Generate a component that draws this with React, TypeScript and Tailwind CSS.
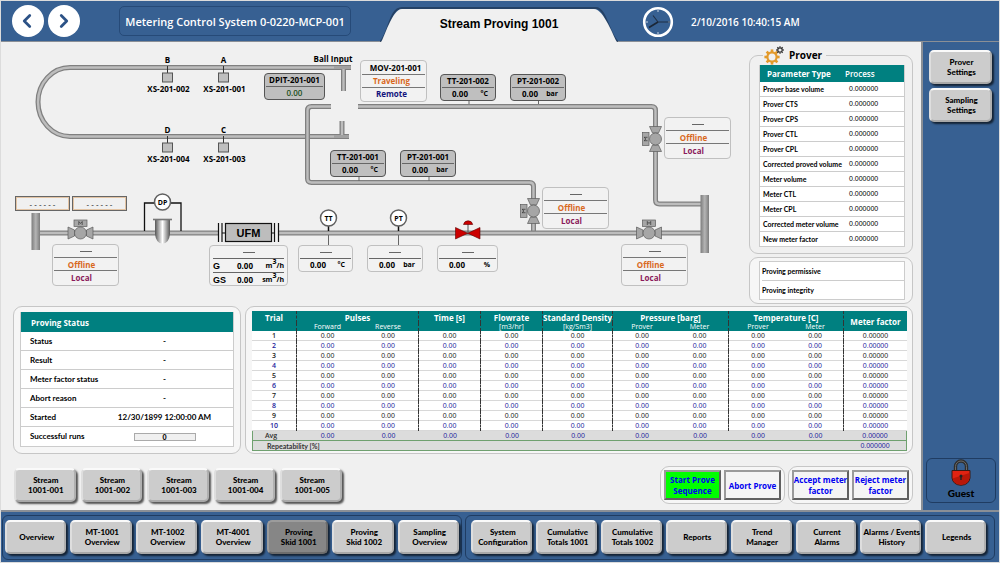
import type { ReactNode } from 'react';
import { ChevronLeft, ChevronRight } from 'lucide-react';

const proverRows = [
  'Prover base volume',
  'Prover CTS',
  'Prover CPS',
  'Prover CTL',
  'Prover CPL',
  'Corrected proved volume',
  'Meter volume',
  'Meter CTL',
  'Meter CPL',
  'Corrected meter volume',
  'New meter factor',
];

const statusRows = [
  { label: 'Status', value: '-' },
  { label: 'Result', value: '-' },
  { label: 'Meter factor status', value: '-' },
  { label: 'Abort reason', value: '-' },
  { label: 'Started', value: '12/30/1899 12:00:00 AM' },
];

const streams = ['001', '002', '003', '004', '005'];

const leftNav = [
  ['Overview'],
  ['MT-1001', 'Overview'],
  ['MT-1002', 'Overview'],
  ['MT-4001', 'Overview'],
  ['Proving', 'Skid 1001'],
  ['Proving', 'Skid 1002'],
  ['Sampling', 'Overview'],
];

const rightNav = [
  ['System', 'Configuration'],
  ['Cumulative', 'Totals 1001'],
  ['Cumulative', 'Totals 1002'],
  ['Reports'],
  ['Trend', 'Manager'],
  ['Current', 'Alarms'],
  ['Alarms / Events', 'History'],
  ['Legends'],
];

const trials = [1, 2, 3, 4, 5, 6, 7, 8, 9, 10];

// last column index of every column group, a dashed rule follows it
const groupEnds = [1, 2, 3, 4, 6, 8];

function BevelButton({ lines, active = false }: { lines: string[]; active?: boolean }) {
  return (
    <button
      type="button"
      className={`flex h-[34px] w-full items-center justify-center rounded-[5px] border-2 font-['Lato',sans-serif] text-[8px] leading-[10px] font-black text-black shadow-[2px_2px_2px_rgba(0,0,0,0.65)] ${
        active
          ? 'border-[#9c9c9c] border-r-[#6c6c6c] border-b-[#6c6c6c] bg-[#868686]'
          : 'border-[#dedede] border-t-[#fafafa] border-r-[#b0b0b0] border-b-[#a8a8a8] bg-[#cccccc]'
      }`}
    >
      <span className="pl-0.5 whitespace-nowrap">
        {lines.map((line) => (
          <span key={line} className="block">
            {line}
          </span>
        ))}
      </span>
    </button>
  );
}

function ActionButton({ lines, green = false }: { lines: string[]; green?: boolean }) {
  return (
    <button
      type="button"
      className={`h-[30px] w-[57px] border-2 border-[#9a9a9a] border-r-[#606060] border-b-[#606060] text-[8px] leading-[11px] font-bold whitespace-nowrap text-[#0000f0] ${
        green ? 'bg-[#00ff00]' : 'bg-[#f4f4f4]'
      }`}
    >
      <span className="-mx-2 block">
        {lines.map((line) => (
          <span key={line} className="block">
            {line}
          </span>
        ))}
      </span>
    </button>
  );
}

function Panel({ className = '', children }: { className?: string; children: ReactNode }) {
  return <section className={`rounded-[9px] border border-[#c6c6c6] bg-[#f6f6f6] ${className}`}>{children}</section>;
}

function Gears() {
  return (
    <svg width="22" height="20" viewBox="0 0 22 20" aria-hidden="true">
      <g stroke="#e39a2b" fill="none">
        <circle cx="9" cy="12" r="4.6" strokeWidth="2.2" />
        {[0, 45, 90, 135, 180, 225, 270, 315].map((a) => (
          <path key={a} d="M9 7V4.4" strokeWidth="2.6" transform={`rotate(${a} 9 12)`} />
        ))}
      </g>
      <g stroke="#333" fill="none">
        <circle cx="17" cy="5" r="2.2" strokeWidth="1.2" />
        {[0, 45, 90, 135, 180, 225, 270, 315].map((a) => (
          <path key={a} d="M17 2.6V1.2" strokeWidth="1.3" transform={`rotate(${a} 17 5)`} />
        ))}
      </g>
    </svg>
  );
}

function Clock() {
  return (
    <svg width="32" height="32" viewBox="0 0 32 32" aria-hidden="true">
      <circle cx="16" cy="16" r="13.8" fill="none" stroke="#fff" strokeWidth="2.6" />
      <path d="M16 4v2M16 26v2M4 16h2M26 16h2" stroke="#c8d4e4" />
      <path d="M16 16H28M16 16L11 9.5" stroke="#1f2f45" strokeWidth="1.1" />
      <path d="M16 16L7 21.5" stroke="#1b2636" strokeWidth="1.6" />
    </svg>
  );
}

function Lock() {
  return (
    <svg width="20" height="27" viewBox="0 0 20 27" aria-hidden="true">
      <path d="M4.5 13V7.5a5.5 5.5 0 0 1 11 0V13" fill="none" stroke="#2e2e2e" strokeWidth="3.4" />
      <path d="M4.5 12V7.5a5.5 5.5 0 0 1 11 0V12" fill="none" stroke="#6a6a6a" strokeWidth="1" />
      <path d="M1 11.5H19V19Q18 25.800 10 26.300Q2 25.800 1 19z" fill="#e02312" stroke="#3a1a14" strokeWidth="1" />
      <path d="M1.500 19.500L18.500 14V19Q17.300 25.200 10 25.700Q2.700 25.200 1.500 19.500z" fill="#b81708" />
      <circle cx="10" cy="17" r="1.5" fill="#222" />
      <path d="M10 17v4" stroke="#222" strokeWidth="1.4" />
    </svg>
  );
}

function Pipe({ d }: { d: string }) {
  return (
    <g fill="none">
      <path d={d} stroke="#808080" strokeWidth="5" />
      <path d={d} stroke="#bdbdbd" strokeWidth="2.4" />
    </g>
  );
}

function Valve({ x, y, turned = false }: { x: number; y: number; turned?: boolean }) {
  return (
    <g transform={`translate(${x} ${y})${turned ? ' rotate(-90)' : ''}`} stroke="#5c5c5c" strokeWidth=".7" fill="#a6a6a6">
      <rect x="-6.5" y="-13" width="13" height="6.5" />
      <path d="M-1.700-8V-11.500L0-9.500L1.700-11.500V-8" fill="none" stroke="#333" />
      <path d="M-12.500-6L-6-3V3L-12.500 6zM12.500-6L6-3V3L12.500 6z" />
      <circle r="6" />
    </g>
  );
}

function Sensor({ x, y, name, tag }: { x: number; y: number; name: string; tag: string }) {
  return (
    <g>
      <path d={`M${x} ${y}v7`} stroke="#333" />
      <rect x={x - 5} y={y + 7} width="10" height="9" fill="#bfbfbf" stroke="#555" />
      <text x={x} y={y - 3} textAnchor="middle">
        {name}
      </text>
      <text x={x + 1} y={y + 26} textAnchor="middle">
        {tag}
      </text>
    </g>
  );
}

function Gauge({ x, y, name }: { x: number; y: number; name: string }) {
  return (
    <g>
      <circle cx={x} cy={y} r="8" fill="#fff" stroke="#606060" strokeWidth="1.5" />
      <text x={x} y={y + 3} textAnchor="middle" fontSize="7">
        {name}
      </text>
    </g>
  );
}

function Piping() {
  return (
    <svg
      width="745"
      height="264"
      viewBox="0 42 745 264"
      className="font-['Open_Sans',sans-serif] text-[8px] font-bold"
      aria-label="Prover piping"
    >
      <defs>
        <linearGradient id="header-pipe">
          <stop offset="0" stopColor="#7c7c7c" />
          <stop offset=".5" stopColor="#b4b4b4" />
          <stop offset="1" stopColor="#7c7c7c" />
        </linearGradient>
        <linearGradient id="strainer">
          <stop offset="0" stopColor="#555" />
          <stop offset=".5" stopColor="#fff" />
          <stop offset="1" stopColor="#555" />
        </linearGradient>
      </defs>

      {/* prover loop and the launch / receive tees */}
      <Pipe d="M351 67.5H70A32 34.5 0 0 0 70 136.5H349" />
      <Pipe d="M343.5 67V91" />
      <Pipe d="M342 121V136" />
      <path d="M334 67.5H351M334 136.5H349" stroke="#a2a2a2" strokeWidth="3" />

      {/* prover inlet and outlet lines */}
      <Pipe d="M331 106.5H311.5Q307.5 106.5 307.5 110.5V178.5Q307.5 182.5 311.5 182.5H529.5Q533.5 182.5 533.5 186.5V233" />
      <Pipe d="M358 106.5H651.5Q655.5 106.5 655.5 110.5V200Q655.5 204 659.5 204H703" />
      <Pipe d="M40 233H703" />

      <rect x="31.5" y="213" width="8.5" height="37" fill="url(#header-pipe)" />
      <rect x="700.5" y="195" width="8.5" height="58" fill="url(#header-pipe)" />

      <Sensor x={167.5} y={66} name="B" tag="XS-201-002" />
      <Sensor x={223.5} y={66} name="A" tag="XS-201-001" />
      <Sensor x={167.5} y={136} name="D" tag="XS-201-004" />
      <Sensor x={223.5} y={136} name="C" tag="XS-201-003" />
      <text x="333" y="62" textAnchor="middle">
        Ball Input
      </text>

      <path d="M469 100v4M538.5 100v4M359 177v4M429 177v4" stroke="#666" />

      {/* strainer with differential pressure */}
      <path d="M144.5 231V203H181V231" fill="none" stroke="#111" strokeWidth="1.3" />
      <Gauge x={162.5} y={202} name="DP" />
      <path d="M155 220H170V234Q169 243.5 162.5 243.5T155 234z" fill="url(#strainer)" />
      <path d="M153 219.5H172" stroke="#777" strokeWidth="1.6" />

      {/* ultrasonic flow meter */}
      <rect x="218" y="229" width="61" height="8" fill="#f0f0f0" />
      <path d="M218.5 223V242M222 223V242M274.5 223V242M278.5 223V242M222 233H225M271 233H275" stroke="#111" strokeWidth="1.2" />
      <rect x="225.5" y="223.5" width="46" height="18" fill="#bdbdbd" stroke="#111" strokeWidth="1.2" />
      <text x="248.5" y="237" textAnchor="middle" fontSize="11" fontFamily="Liberation Sans">
        UFM
      </text>

      <path d="M328.5 226V231M398.5 226V231" stroke="#111" strokeWidth="1.5" />
      <path d="M328.5 235V246M398.5 235V246" stroke="#666" />
      <Gauge x={328.5} y={218} name="TT" />
      <Gauge x={398.5} y={218} name="PT" />

      {/* flow control valve */}
      <path d="M468 224V233" stroke="#555" />
      <path d="M455.5 227.5V239L480 227.5V239z" fill="#cc0000" stroke="#5c0000" strokeWidth=".6" />
      <path d="M463.5 224.5A4.7 4.7 0 0 1 472.7 224.5z" fill="#cc0000" stroke="#5c0000" strokeWidth=".6" />

      <Valve x={80.5} y={233} />
      <Valve x={649} y={233} />
      <Valve x={533.5} y={211} turned />
      <Valve x={655.5} y={139} turned />
    </svg>
  );
}

function Tag({ place, name, value, unit }: { place: string; name: string; value: string; unit?: string }) {
  return (
    <div
      className={`absolute h-[27px] rounded-[4px] border border-[#555] bg-[#bfbfbf] px-px text-center text-[8px] leading-[12px] font-bold whitespace-nowrap ${place}`}
    >
      <div className="h-[13px] border-b border-[#666]">{name}</div>
      {unit ? (
        <div className="flex justify-between pr-1.5 pl-2.5">
          <span>{value}</span>
          <span className="text-[7px]">{unit}</span>
        </div>
      ) : (
        <div className="font-semibold text-[#205020]">{value}</div>
      )}
    </div>
  );
}

function Dash() {
  return <div className="mx-auto mt-[6px] mb-[5px] h-px w-3 bg-[#666]" />;
}

function ValveCard({ place }: { place: string }) {
  return (
    <div
      className={`absolute h-[42px] w-[67px] rounded-[4px] border border-[#c0c0c0] bg-[#f2f2f2] px-px text-center text-[8px] leading-[13px] font-bold ${place}`}
    >
      <Dash />
      <div className="h-[14px] border-y border-[#777] pr-2 text-[#d9681d]">Offline</div>
      <div className="pr-2 text-[#8b1a5a]">Local</div>
    </div>
  );
}

function Reading({ place, unit }: { place: string; unit: string }) {
  return (
    <div className={`absolute h-[27px] rounded-[4px] border border-[#c0c0c0] bg-[#f2f2f2] px-px text-[8px] leading-[12px] font-bold ${place}`}>
      <Dash />
      <div className="flex justify-between border-t border-[#666] pr-1.5 pl-2.5">
        <span>0.00</span>
        <span className="text-[7px]">{unit}</span>
      </div>
    </div>
  );
}

function FlowRow({ name, unit }: { name: string; unit: string }) {
  return (
    <div className="flex h-[14px] items-center border-t border-[#666]">
      <span className="w-6 font-['Liberation_Sans',sans-serif] text-[9px]">{name}</span>
      <span className="flex-1">0.00</span>
      <span className="text-[7px]">
        {unit}
        <sup className="text-[7px]">3</sup>/h
      </span>
    </div>
  );
}

function Diagram() {
  return (
    <div className="relative min-w-0 flex-1">
      <Piping />
      <Tag place="top-[31px] left-[264px] w-[61px]" name="DPIT-201-001" value="0.00" />
      <Tag place="top-[32px] left-[440px] w-[56px]" name="TT-201-002" value="0.00" unit="°C" />
      <Tag place="top-[32px] left-[510px] w-[56px]" name="PT-201-002" value="0.00" unit="bar" />
      <Tag place="top-[108px] left-[330px] w-[56px]" name="TT-201-001" value="0.00" unit="°C" />
      <Tag place="top-[108px] left-[400px] w-[56px]" name="PT-201-001" value="0.00" unit="bar" />

      <div className="absolute top-[18px] left-[360px] h-[42px] w-[67px] rounded-[4px] border border-[#c0c0c0] bg-[#f2f2f2] px-px pt-px text-center text-[8px] leading-[12px] font-bold">
        <div className="pl-1">MOV-201-001</div>
        <div className="h-[14px] border-y border-[#777] pr-1 text-[#d9681d]">Traveling</div>
        <div className="pr-1 text-[#12127c]">Remote</div>
      </div>

      <ValveCard place="top-[75px] left-[664px]" />
      <ValveCard place="top-[145px] left-[542px]" />
      <ValveCard place="top-[202px] left-[621px]" />
      <ValveCard place="top-[202px] left-[52px]" />

      <div className="absolute top-[203px] left-[209px] h-[41px] w-[79px] rounded-[4px] border border-[#c0c0c0] bg-[#f2f2f2] px-[3px] text-[8px] leading-[12px] font-bold">
        <Dash />
        <FlowRow name="G" unit="m" />
        <FlowRow name="GS" unit="sm" />
      </div>
      <Reading place="top-[203px] left-[298px] w-[55px]" unit="°C" />
      <Reading place="top-[203px] left-[367px] w-[56px]" unit="bar" />
      <Reading place="top-[203px] left-[437px] w-[61px]" unit="%" />

      <div className="absolute top-[154px] left-[15px] flex gap-0.5 text-center text-[8px] leading-[13px]">
        <div className="h-[15px] w-[55px] border border-[#666] outline -outline-offset-2 outline-[#e3c4a4]">- - - - - -</div>
        <div className="h-[15px] w-[55px] border border-[#666] outline -outline-offset-2 outline-[#e3c4a4]">- - - - - -</div>
      </div>
    </div>
  );
}

function ProverPanel() {
  return (
    <fieldset className="rounded-[9px] border border-[#c6c6c6] bg-transparent pt-px pr-[7px] pb-[6px] pl-[9px]">
      <legend className="ml-1 flex h-[18px] items-center gap-1 pr-1 text-[10px] font-bold">
        <Gears />
        Prover
      </legend>
      <table className="w-full border-separate border-spacing-0 border-x border-[#ccc] bg-white text-left text-[7px] leading-[10px]">
        <thead className="bg-[#008080] text-white">
          <tr>
            <th className="h-[17px] w-[85px] pl-[7px] text-[8px] font-bold whitespace-nowrap">Parameter Type</th>
            <th className="text-[8px] font-semibold">Process</th>
          </tr>
        </thead>
        <tbody>
          {proverRows.map((row) => (
            <tr key={row}>
              <td className="h-[15px] border-b border-[#ccc] pl-[3px] font-['Lato',sans-serif] font-bold whitespace-nowrap">{row}</td>
              <td className="border-b border-[#ccc] pl-1 font-['Liberation_Sans',sans-serif]">0.000000</td>
            </tr>
          ))}
        </tbody>
      </table>
    </fieldset>
  );
}

function StatusPanel() {
  return (
    <Panel className="w-[228px] px-[6px] py-[5px]">
      <table className="w-full border-separate border-spacing-0 border-x border-b border-[#ccc] bg-white font-['Lato',sans-serif] text-[8px] leading-[11px] font-bold">
        <thead className="bg-[#008080] text-left font-['Open_Sans',sans-serif] text-white">
          <tr>
            <th colSpan={2} className="h-5 pl-2.5 font-bold">
              Proving Status
            </th>
          </tr>
        </thead>
        <tbody>
          {statusRows.map((row) => (
            <tr key={row.label}>
              <td className="h-[19px] w-[85px] border-b border-[#ccc] pl-[9px] whitespace-nowrap">{row.label}</td>
              <td className="border-b border-[#ccc] pr-2.5 text-center whitespace-nowrap">{row.value}</td>
            </tr>
          ))}
          <tr>
            <td className="h-[19px] pl-[9px]">Successful runs</td>
            <td className="pr-2.5">
              <output className="mx-auto block h-2 w-[62px] border border-[#aaa] bg-[#f0f0f0] text-center text-[7px] leading-[6px] font-black">0</output>
            </td>
          </tr>
        </tbody>
      </table>
    </Panel>
  );
}

function TrialTable() {
  const dashed = 'border-r border-dashed border-r-[#333]';
  const sub = 'h-[8px] pb-px text-[7px] leading-[6px] font-normal';
  return (
    <Panel className="min-w-0 flex-1 px-[6px] pt-1 pb-0.5">
      <table className="w-full table-fixed border-separate border-spacing-0 bg-white text-center text-[7px] leading-[8px]">
        <colgroup>
          <col className="w-[45px]" />
          <col className="w-[61px]" />
          <col className="w-[61px]" />
          <col className="w-[62px]" />
          <col className="w-[62px]" />
          <col className="w-[70px]" />
          <col className="w-[58px]" />
          <col className="w-[58px]" />
          <col className="w-[58px]" />
          <col className="w-[57px]" />
          <col className="w-[63px]" />
        </colgroup>
        <thead className="bg-[#008080] text-[8px] leading-[11px] whitespace-nowrap text-white">
          <tr>
            <th className={`h-[12px] ${dashed}`}>Trial</th>
            <th colSpan={2} className={dashed}>Pulses</th>
            <th className={dashed}>Time [s]</th>
            <th className={dashed}>Flowrate</th>
            <th className={dashed}>Standard Density</th>
            <th colSpan={2} className={dashed}>Pressure [barg]</th>
            <th colSpan={2} className={dashed}>Temperature [C]</th>
            <th rowSpan={2}>Meter factor</th>
          </tr>
          <tr>
            <th className={`${sub} ${dashed}`}></th>
            <th className={sub}>Forward</th>
            <th className={`${sub} ${dashed}`}>Reverse</th>
            <th className={`${sub} ${dashed}`}></th>
            <th className={`${sub} ${dashed}`}>[m3/hr]</th>
            <th className={`${sub} ${dashed}`}>[kg/Sm3]</th>
            <th className={sub}>Prover</th>
            <th className={`${sub} ${dashed}`}>Meter</th>
            <th className={sub}>Prover</th>
            <th className={`${sub} ${dashed}`}>Meter</th>
          </tr>
        </thead>
        <tbody>
          {trials.map((n) => (
            <tr key={n} className={n % 2 ? 'text-[#222]' : 'text-[#1c1c9c]'}>
              <th className={`h-[10px] font-semibold shadow-[inset_0_-1px_#d8d8d8] ${dashed}`}>{n}</th>
              {[0, 1, 2, 3, 4, 5, 6, 7, 8].map((c) => (
                <td
                  key={c}
                  className={`font-['Liberation_Sans',sans-serif] shadow-[inset_0_-1px_#d8d8d8] ${groupEnds.includes(c) ? dashed : ''}`}
                >
                  0.00
                </td>
              ))}
              <td className="font-['Liberation_Sans',sans-serif] shadow-[inset_0_-1px_#d8d8d8]">0.00000</td>
            </tr>
          ))}
        </tbody>
        <tfoot className="bg-[#dcdcdc] text-[#1c1c9c]">
          <tr>
            <th className="h-[10px] border-b border-l border-[#6fa06f] pr-2 font-semibold text-[#333]">Avg</th>
            {[0, 1, 2, 3, 4, 5, 6, 7, 8].map((c) => (
              <td key={c} className="border-b border-[#6fa06f] font-['Liberation_Sans',sans-serif]">
                0.00
              </td>
            ))}
            <td className="border-r border-b border-[#6fa06f] font-['Liberation_Sans',sans-serif]">0.00000</td>
          </tr>
          <tr>
            <th
              colSpan={10}
              className="h-[10px] border-b border-l border-[#6fa06f] pl-[14px] text-left font-['Lato',sans-serif] font-bold text-[#333]"
            >
              Repeatability [%]
            </th>
            <td className="border-r border-b border-[#6fa06f] font-['Liberation_Sans',sans-serif]">0.000000</td>
          </tr>
        </tfoot>
      </table>
    </Panel>
  );
}

function Header() {
  return (
    <header className="flex h-[41px] items-center border-b border-[#8a8f96] bg-[#376092] pl-[11px] text-white">
      <div className="flex gap-1">
        <button type="button" aria-label="Back" className="flex size-8 items-center justify-center rounded-full bg-white pr-0.5 text-[#2c5286]">
          <ChevronLeft size={22} strokeWidth={3} />
        </button>
        <button type="button" aria-label="Forward" className="flex size-8 items-center justify-center rounded-full bg-white text-[#2c5286]">
          <ChevronRight size={22} strokeWidth={3} />
        </button>
      </div>
      <div className="ml-[39px] flex h-[30px] w-[232px] items-center justify-center rounded-[5px] border border-[#264a78] pt-0.5 text-[11px] font-semibold whitespace-nowrap">
        Metering Control System 0-0220-MCP-001
      </div>
      <div className="relative ml-[29px] flex h-10 w-[238px] items-center justify-center">
        <svg className="absolute inset-0" width="238" height="41" viewBox="0 0 238 41" aria-hidden="true">
          <path d="M0 41C9 34 9 7 22 7H216C226 7 229 34 238 41" fill="none" stroke="#1c3452" strokeWidth="2" opacity=".7" />
          <path d="M1 41C4 38 12 8 22 8H214C224 8 234 37 237 41z" fill="#f0f0f0" />
        </svg>
        <h1 className="relative pt-1.5 font-['Liberation_Sans',sans-serif] text-[12px] font-bold text-black">Stream Proving 1001</h1>
      </div>
      <div className="ml-6 flex items-center gap-[17px] pt-0.5">
        <Clock />
        <time className="text-[10px] font-semibold whitespace-nowrap">2/10/2016 10:40:15 AM</time>
      </div>
    </header>
  );
}

export default function App() {
  return (
    <div className="flex min-h-screen flex-col border border-[#dcdcdc] bg-[#f0f0f0] font-['Open_Sans','Noto_Sans',sans-serif] text-black">
      <Header />

      <div className="flex flex-1">
        <main className="-ml-px flex min-w-0 flex-1 flex-col">
          <div className="flex">
            <Diagram />
            <div className="mr-2 flex w-[164px] flex-col gap-[3px] pt-1">
              <ProverPanel />
              <Panel className="py-[3px] pr-[7px] pl-[9px]">
                <ul className="border border-[#ccc] bg-white pl-0.5 font-['Lato',sans-serif] text-[7px] leading-[18px] font-bold">
                  <li className="h-[19px] border-b border-[#ccc]">Proving permissive</li>
                  <li className="h-[18px]">Proving integrity</li>
                </ul>
              </Panel>
            </div>
          </div>

          <div className="flex gap-1 pr-2 pl-[13px]">
            <StatusPanel />
            <TrialTable />
          </div>

          <div className="flex items-center justify-between pt-3 pr-2 pb-1.5 pl-[14px]">
            <div className="grid w-[328px] grid-cols-5 gap-[5px]">
              {streams.map((s) => (
                <BevelButton key={s} lines={['Stream', `1001-${s}`]} />
              ))}
            </div>
            <div className="flex gap-[3px]">
              <Panel className="flex gap-[3px] p-[3px]">
                <ActionButton lines={['Start Prove', 'Sequence']} green />
                <ActionButton lines={['Abort Prove']} />
              </Panel>
              <Panel className="flex gap-[3px] p-[3px]">
                <ActionButton lines={['Accept meter', 'factor']} />
                <ActionButton lines={['Reject meter', 'factor']} />
              </Panel>
            </div>
          </div>
        </main>

        <aside className="flex w-[78px] flex-col justify-between border-l-2 border-[#8a8f96] bg-[#376092] px-[3px] pt-2 pb-[7px]">
          <div className="flex flex-col gap-1 pr-1 pl-[3px]">
            <BevelButton lines={['Prover', 'Settings']} />
            <BevelButton lines={['Sampling', 'Settings']} />
          </div>
          <button
            type="button"
            className="flex h-[45px] flex-col items-center rounded-[6px] border border-[#1f3c62] font-['Lato',sans-serif] text-[10px] leading-[14px] font-black"
          >
            <Lock />
            Guest
          </button>
        </aside>
      </div>

      <footer className="grid grid-cols-[460fr_529fr] gap-[3px] border-t-2 border-[#8a8f96] bg-[#376092] pt-[3px] pr-1 pb-0.5 pl-px">
        <nav className="grid grid-cols-7 gap-1 rounded-[6px] border border-[#1f3c62] px-[2px] pt-1 pb-[5px]">
          {leftNav.map((lines) => (
            <BevelButton key={lines.join(' ')} lines={lines} active={lines[1] === 'Skid 1001'} />
          ))}
        </nav>
        <nav className="grid grid-cols-8 gap-1 rounded-[6px] border border-[#1f3c62] pt-1 pr-2 pb-[5px] pl-[5px]">
          {rightNav.map((lines) => (
            <BevelButton key={lines.join(' ')} lines={lines} />
          ))}
        </nav>
      </footer>
    </div>
  );
}
